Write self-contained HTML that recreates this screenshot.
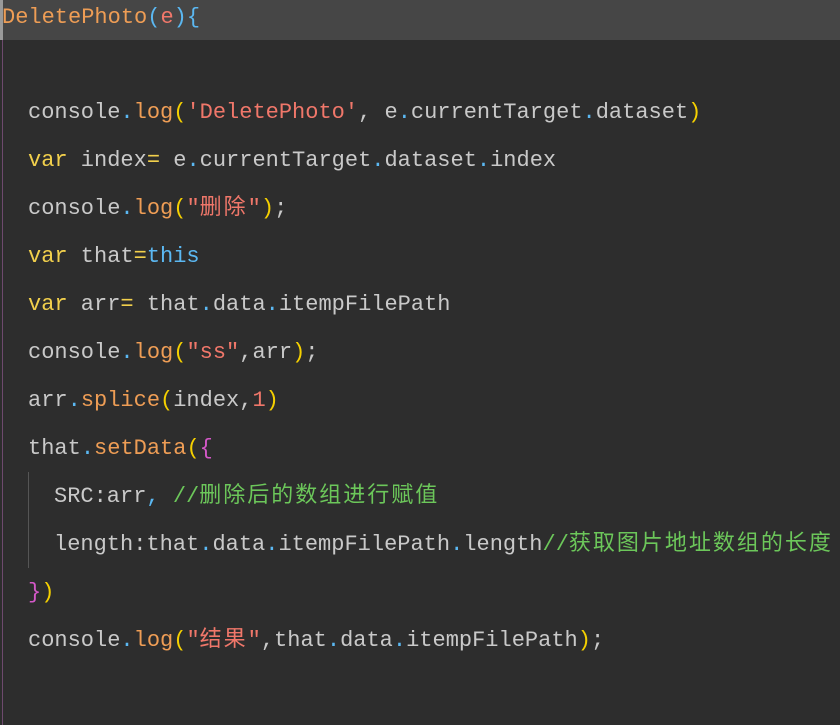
<!DOCTYPE html><html><head><meta charset="utf-8"><style>
body{margin:0;width:840px;height:725px;background:#2d2d2d;overflow:hidden;position:relative;font-family:"Liberation Mono","Noto Sans CJK SC",monospace;font-size:22px;color:#c9c9c9}
.hl{position:absolute;left:0;top:0;width:840px;height:40px;background:#464646}
.bar{position:absolute;left:0;top:0;width:3px;height:40px;background:#9a9a9a}
.pl{position:absolute;left:2px;top:40px;width:1px;height:685px;background:#6e4a6e}
.ig{position:absolute;left:28px;top:472px;width:1px;height:96px;background:#555}
.l{position:absolute;white-space:pre;line-height:30px;height:30px}
.z{letter-spacing:2px}
.k{color:#f2d04c}.f{color:#ee9d55}.s{color:#f0776a}.b{color:#5bb8f2}.c{color:#6cc75a}.p{color:#f5d000}.m{color:#d458c8}.d{color:#5bb8f2}
</style></head><body>
<div class="hl"></div><div class="bar"></div><div class="pl"></div><div class="ig"></div>
<div class="l" style="left:2px;top:3px"><span class="f">DeletePhoto</span><span class="b">(</span><span class="s">e</span><span class="b">){</span></div>
<div class="l" style="left:28px;top:98px">console<span class="d">.</span><span class="f">log</span><span class="p">(</span><span class="s">'DeletePhoto'</span>, e<span class="d">.</span>currentTarget<span class="d">.</span>dataset<span class="p">)</span></div>
<div class="l" style="left:28px;top:146px"><span class="k">var</span> index<span class="k">=</span> e<span class="d">.</span>currentTarget<span class="d">.</span>dataset<span class="d">.</span>index</div>
<div class="l" style="left:28px;top:194px">console<span class="d">.</span><span class="f">log</span><span class="p">(</span><span class="s">"<span class="z">删除</span>"</span><span class="p">)</span>;</div>
<div class="l" style="left:28px;top:242px"><span class="k">var</span> that<span class="k">=</span><span class="b">this</span></div>
<div class="l" style="left:28px;top:290px"><span class="k">var</span> arr<span class="k">=</span> that<span class="d">.</span>data<span class="d">.</span>itempFilePath</div>
<div class="l" style="left:28px;top:338px">console<span class="d">.</span><span class="f">log</span><span class="p">(</span><span class="s">"ss"</span>,arr<span class="p">)</span>;</div>
<div class="l" style="left:28px;top:386px">arr<span class="d">.</span><span class="f">splice</span><span class="p">(</span>index,<span class="s">1</span><span class="p">)</span></div>
<div class="l" style="left:28px;top:434px">that<span class="d">.</span><span class="f">setData</span><span class="p">(</span><span class="m">{</span></div>
<div class="l" style="left:54px;top:482px">SRC:arr<span class="d">,</span> <span class="c">//<span class="z">删除后的数组进行赋值</span></span></div>
<div class="l" style="left:54px;top:530px">length:that<span class="d">.</span>data<span class="d">.</span>itempFilePath<span class="d">.</span>length<span class="c">//<span class="z">获取图片地址数组的长度</span></span></div>
<div class="l" style="left:28px;top:578px"><span class="m">}</span><span class="p">)</span></div>
<div class="l" style="left:28px;top:626px">console<span class="d">.</span><span class="f">log</span><span class="p">(</span><span class="s">"<span class="z">结果</span>"</span>,that<span class="d">.</span>data<span class="d">.</span>itempFilePath<span class="p">)</span>;</div>
</body></html>
